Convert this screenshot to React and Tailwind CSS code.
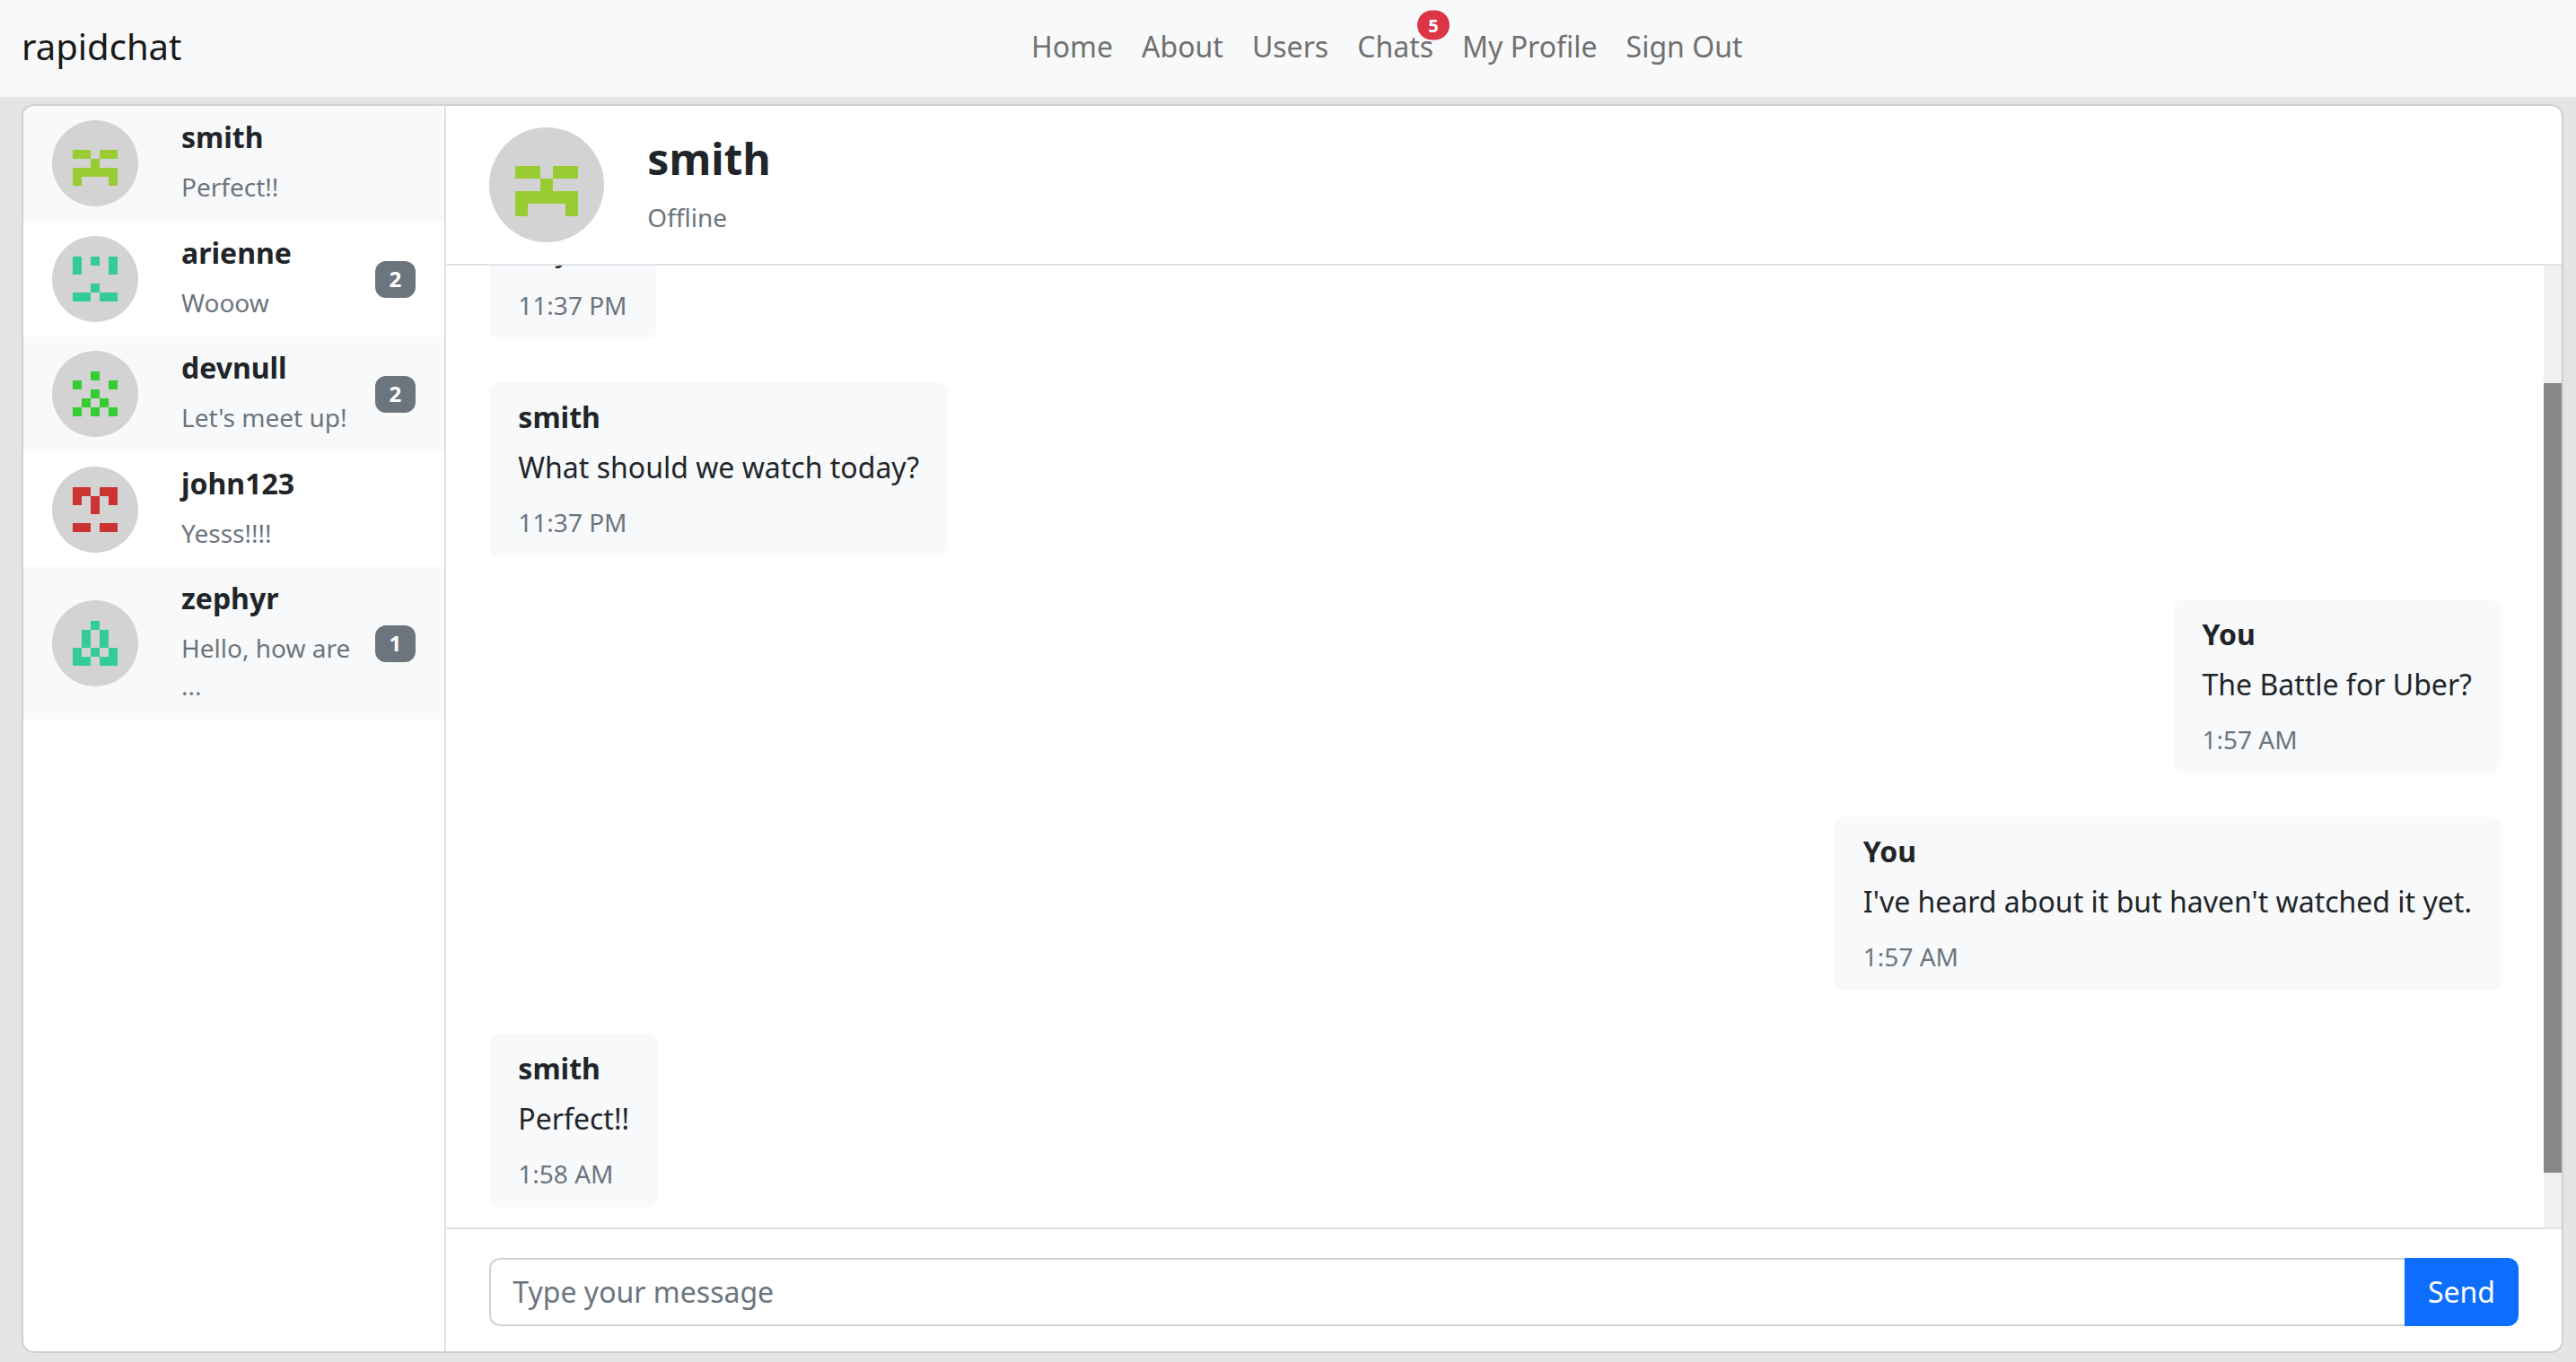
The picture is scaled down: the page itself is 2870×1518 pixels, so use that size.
import React from "react";

const navLinks = [
  { label: "Home" },
  { label: "About" },
  { label: "Users" },
  { label: "Chats", count: 5 },
  { label: "My Profile" },
  { label: "Sign Out" },
];

const contacts = [
  {
    name: "smith",
    last: "Perfect!!",
    color: "#99cc33",
    cells: [".....", "XX.XX", "..X..", "XXXXX", "X...X"],
  },
  {
    name: "arienne",
    last: "Wooow",
    unread: 2,
    color: "#33cc99",
    cells: ["X.X.X", "X...X", ".....", "..X..", "XX.XX"],
  },
  {
    name: "devnull",
    last: "Let's meet up!",
    unread: 2,
    color: "#33cc33",
    cells: ["..X..", "X...X", "..X..", ".X.X.", "X.X.X"],
  },
  {
    name: "john123",
    last: "Yesss!!!!",
    color: "#cc3333",
    cells: ["XX.XX", "X.X.X", "..X..", ".....", "XX.XX"],
  },
  {
    name: "zephyr",
    last: "Hello, how are ...",
    unread: 1,
    color: "#33cc99",
    cells: ["..X..", ".X.X.", ".X.X.", "X.X.X", "XX.XX"],
  },
];

const messages = [
  { from: "smith", text: "Hey", time: "11:37 PM" },
  { from: "smith", text: "What should we watch today?", time: "11:37 PM" },
  { from: "You", text: "The Battle for Uber?", time: "1:57 AM" },
  { from: "You", text: "I've heard about it but haven't watched it yet.", time: "1:57 AM" },
  { from: "smith", text: "Perfect!!", time: "1:58 AM" },
];

function Avatar({ user, large }) {
  return (
    <span
      className={`block shrink-0 rounded-full bg-[#d3d3d3] ${
        large ? "size-32 p-[29px]" : "size-24 p-[23px]"
      }`}
    >
      <svg viewBox="0 0 5 5" className="block size-full" fill={user.color} shapeRendering="crispEdges" aria-hidden="true">
        {user.cells.flatMap((row, y) =>
          [...row].map((cell, x) =>
            cell === "X" ? <rect key={`${x}-${y}`} x={x} y={y} width="1" height="1" /> : null
          )
        )}
      </svg>
    </span>
  );
}

function Navbar() {
  return (
    <nav className="flex h-[108px] shrink-0 items-center bg-[#f8f9fa] pr-3.5 pb-1 pl-6">
      <a href="#" className="mr-8 text-[40px] leading-[60px] text-[#191919]">
        rapidchat
      </a>
      <ul className="mx-auto flex">
        {navLinks.map((link) => (
          <li key={link.label}>
            <a href="#" className="block px-4 text-[32px] leading-[48px] text-[#707070]">
              <span className="relative block">
                {link.label}
                {link.count && (
                  <span className="absolute left-full top-0 flex h-[33px] w-9 -translate-x-1/2 -translate-y-1/2 items-center justify-center rounded-full bg-[#dc3545] text-[20px] leading-5 font-bold text-white">
                    {link.count}
                  </span>
                )}
              </span>
            </a>
          </li>
        ))}
      </ul>
    </nav>
  );
}

function Sidebar() {
  return (
    <aside className="w-1/6 shrink-0 border-r-2 border-[#dee2e6]">
      <ul>
        {contacts.map((c) => (
          <li key={c.name} className="first:rounded-t-xl odd:bg-[#f8f9fa] even:pt-px">
            <a href="#" className="flex items-center px-8 py-4">
              <Avatar user={c} />
              <span className="mb-px ml-12 min-w-0 flex-1">
                <span className="mb-4 block text-[32px] leading-[37px] font-bold">{c.name}</span>
                <span className="block text-[28px] leading-[42px] text-[#6c757d]">{c.last}</span>
              </span>
              {c.unread && (
                <span className="ml-4 rounded-xl bg-[#6c757d] px-4 pt-[7px] pb-[9px] text-[24px] leading-[25px] font-bold text-white">
                  {c.unread}
                </span>
              )}
            </a>
          </li>
        ))}
      </ul>
    </aside>
  );
}

function Message({ message }) {
  return (
    <li
      className={`shrink-0 rounded-xl bg-[#f8f9fa] px-8 pt-[15px] pb-[17px] ${
        message.from === "You" ? "self-end" : "self-start"
      }`}
    >
      <p className="mb-2 text-[32px] leading-[48px] font-bold">{message.from}</p>
      <p className="mb-4 text-[32px] leading-[48px]">{message.text}</p>
      <p className="text-[28px] leading-[42px] text-[#6c757d]">{message.time}</p>
    </li>
  );
}

function Conversation({ user }) {
  return (
    <section className="flex min-w-0 flex-1 flex-col">
      <header className="flex shrink-0 items-center border-b-2 border-[#dee2e6] px-12 py-6">
        <Avatar user={user} large />
        <div className="mb-px ml-12">
          <h1 className="mb-4 text-[48px] leading-[57px] font-bold">{user.name}</h1>
          <p className="text-[28px] leading-[42px] text-[#6c757d]">Offline</p>
        </div>
      </header>

      <div className="flex min-h-0 flex-1">
        <ul className="flex flex-1 flex-col justify-end gap-12 overflow-hidden px-12 pb-[22px]">
          {messages.map((m, i) => (
            <Message key={i} message={m} />
          ))}
        </ul>
        <div className="flex w-5 flex-col bg-[#f0f0f0]" aria-hidden="true">
          <div className="grow-[131]" />
          <div className="grow-[880] bg-[#888888]" />
          <div className="grow-[61]" />
        </div>
      </div>

      <form
        className="flex shrink-0 border-t-2 border-[#dee2e6] px-12 pt-8 pb-7"
        onSubmit={(e) => e.preventDefault()}
      >
        <input
          type="text"
          aria-label="Message"
          placeholder="Type your message"
          className="h-[76px] min-w-0 flex-1 rounded-l-xl border-2 border-r-0 border-[#ced4da] bg-white px-6 pb-0.5 text-[32px] leading-[48px] outline-none placeholder:text-[#6c757d] placeholder:opacity-100"
        />
        <button
          type="submit"
          className="rounded-r-xl bg-[#0d6efd] px-[26px] text-[32px] leading-[48px] text-white"
        >
          Send
        </button>
      </form>
    </section>
  );
}

export default function App() {
  return (
    <div className="flex h-screen flex-col bg-[#e5e5e5] font-['Noto_Sans',sans-serif] text-[#212529]">
      <Navbar />
      <main className="mt-2 mr-3.5 mb-2.5 ml-6 flex min-h-0 flex-1 overflow-hidden rounded-[14px] border-2 border-[#d0d0d0] bg-white">
        <Sidebar />
        <Conversation user={contacts[0]} />
      </main>
    </div>
  );
}
